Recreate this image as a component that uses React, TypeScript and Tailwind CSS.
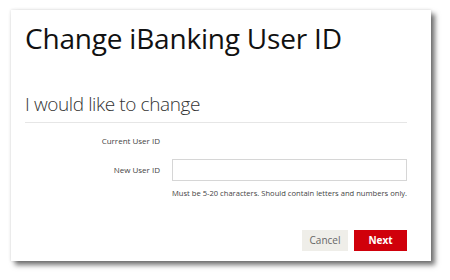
import React from "react";

export default function App() {
  return (
    <div className="w-[450px] h-[280px] bg-white pt-[10px] pl-[11px]" style={{ fontFamily: '"Open Sans", "Noto Sans", sans-serif' }}>
      <div className="w-[420px] h-[251px] bg-white pl-[14px] pr-[24px] pt-[12px] shadow-[4px_4px_5px_rgba(0,0,0,0.55),0_0_3px_rgba(0,0,0,0.15)]">
        <h1 className="text-[28px] leading-[32px] text-[#111] font-normal tracking-[-0.2px]">Change iBanking User ID</h1>
        <h2 className="mt-[38px] text-[19px] leading-[24px] text-[#333] font-light tracking-[-0.4px]">I would like to change</h2>
        <div className="mt-[6px] h-px bg-[#e6e6e6]" />
        <div className="mt-[12px] flex items-center">
          <div className="w-[135px] text-right text-[8px] leading-[12px] text-[#444]">Current User ID</div>
        </div>
        <div className="mt-[12px] flex items-center gap-[12px]">
          <div className="w-[135px] text-right text-[8px] leading-[12px] text-[#444]">New User ID</div>
          <input className="w-[235px] h-[22px] border border-[#d6d6d6] bg-white outline-none" />
        </div>
        <div className="mt-[7px] pl-[147px] text-[7.6px] leading-[10px] text-[#444] whitespace-nowrap">Must be 5-20 characters. Should contain letters and numbers only.</div>
        <div className="mt-[32px] flex justify-end gap-[6px]">
          <button className="w-[46px] h-[21px] bg-[#efeee9] text-[#666] text-[10px]">Cancel</button>
          <button className="w-[53px] h-[21px] bg-[#d0000b] text-white text-[10px] font-bold">Next</button>
        </div>
      </div>
    </div>
  );
}
